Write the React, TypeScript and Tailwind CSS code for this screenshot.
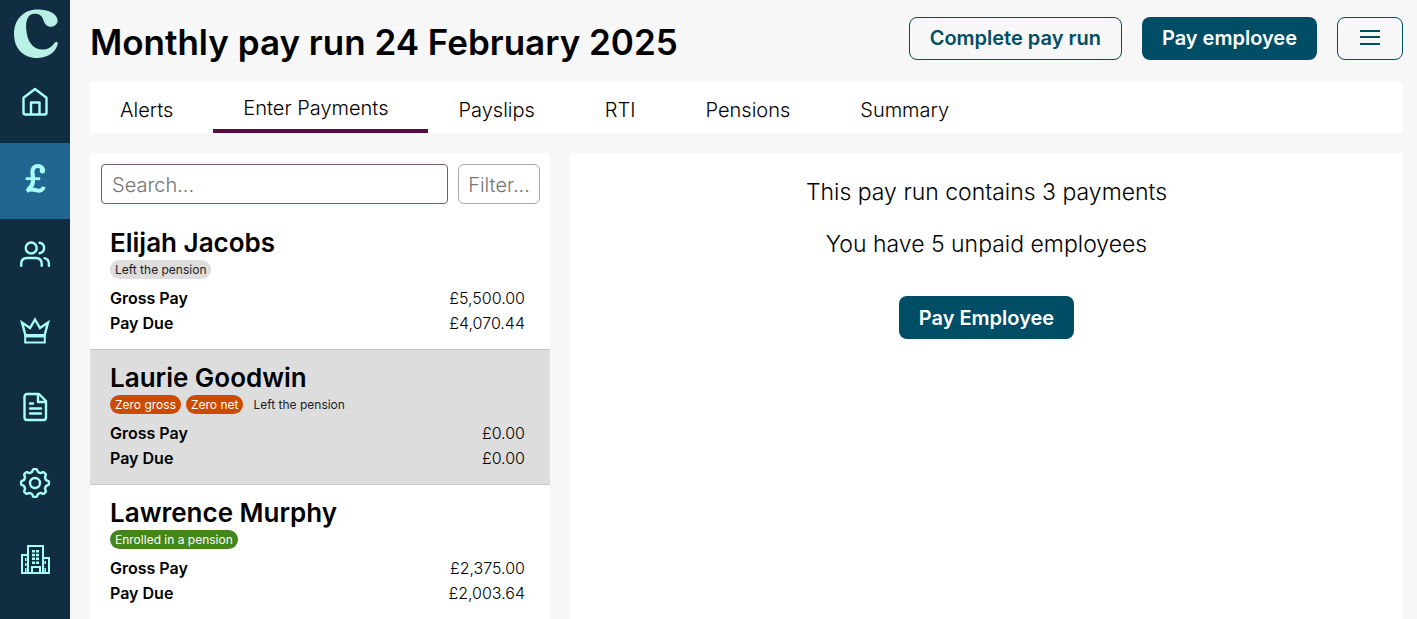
import type { ReactNode } from "react";

const iconProps = {
  viewBox: "0 0 32 32",
  className: "h-[32px] w-[32px] fill-none stroke-[#a8fff8]",
  strokeWidth: 2.4,
  "aria-hidden": true,
};

/* Outline of the eight-toothed cog, centred in a 32 unit box. */
const cogPath = (() => {
  const points: string[] = [];
  for (let i = 0; i < 96; i++) {
    const a = (i / 96) * Math.PI * 2;
    const wave = Math.max(-1, Math.min(1, Math.cos(a * 8) * 1.7));
    const r = 12.6 + wave * 1.3;
    points.push(`${(16 + r * Math.cos(a)).toFixed(2)} ${(16 + r * Math.sin(a)).toFixed(2)}`);
  }
  return `M${points.join("L")}Z`;
})();

function LogoMark() {
  return (
    <svg viewBox="0 0 46 51" className="h-[51px] w-[46px]" aria-hidden="true">
      <path
        fill="#b9efe5"
        d="M25 1.500C10 1.500 1 12 1 26c0 14 9 24 23 24 10 0 18-5 20.500-13 .9-3.500-1.300-4.200-3-2-3.500 5-8 7-13 6.500C19.500 41 14 33 13.200 21 12.600 11 15.500 6 21.500 5.700c5-.3 7.500 2 9 6.500 1.300 4.300 4 6.800 7.900 6.500 4-.3 6.500-3.200 6.200-6.700C43.800 5.500 35 1.500 25 1.500Z"
      />
    </svg>
  );
}

const HomeIcon = () => (
  <svg {...iconProps}>
    <path strokeLinejoin="round" d="M16 2 4.500 10.800V25.500a2 2 0 0 0 2 2h19a2 2 0 0 0 2-2V10.800ZM12 27.500V15.500h8.500v12" />
  </svg>
);
const PoundIcon = () => (
  <svg {...iconProps}>
    <path strokeWidth="4.200" d="M24.300 7.500C23.500 4.400 21.500 3 19 3c-4.200 0-6.200 3.200-5.500 7.500.8 5.500 2 11-4.400 16.200" />
    <path strokeWidth="2.800" d="M6.700 15.700h14.500" />
    <path strokeWidth="4" d="M7.600 28c4-2.800 7-1.500 10-.6 3.500 1.100 6.200-.1 7.200-3.600" />
    <circle cx="23.400" cy="7.800" r="2.700" fill="#a8fff8" stroke="none" />
  </svg>
);
const PeopleIcon = () => (
  <svg {...iconProps}>
    <circle cx="12.200" cy="9" r="5.500" />
    <path strokeLinecap="round" d="M2.200 26.700V25c0-4 2-6 6-6h8.500c4 0 6 2 6 6v1.700M20.600 3.800c6 1.200 6 9.200 0 10.400M25.500 19.200c3 .7 4.400 2.500 4.400 5.800v1.700" />
  </svg>
);
const CrownIcon = () => (
  <svg {...iconProps}>
    <path d="M6.500 20.500 3 7.500l8 5.500L16 4.500l5 8.500 8-5.500-3.500 13Z" />
    <path strokeWidth="2" d="M6.200 20h19.600v7.500H6.200Z" />
    <path strokeWidth="2" d="M6 21.500h20" />
  </svg>
);
const DocumentIcon = () => (
  <svg {...iconProps}>
    <path strokeLinejoin="round" d="M20 3H8a2.500 2.500 0 0 0-2.500 2.500v21A2.500 2.500 0 0 0 8 29h16.500a2.500 2.500 0 0 0 2.500-2.500V10Zm-1 0v8h8" />
    <path strokeLinecap="round" d="M11 12.500h3M11 17.500h11M11 22.500h11" />
  </svg>
);
const CogIcon = () => (
  <svg {...iconProps}>
    <path strokeLinejoin="round" d={cogPath} />
    <circle cx="16" cy="16" r="5" />
  </svg>
);
const BuildingIcon = () => (
  <svg {...iconProps}>
    <path strokeWidth="2" d="M9 31V3h15v28M9 12H3v18h27V15h-6M13 30v-6h8v6" />
    <path strokeWidth="3" d="M14.500 7v15M18.500 7v15" strokeDasharray="2.500 1.300" />
    <path strokeWidth="1.500" d="M6.800 15v3M6.800 20v3M6.800 25v5M26.200 18v3M26.200 25v5" />
  </svg>
);

const navItems: { name: string; icon: ReactNode; active?: boolean }[] = [
  { name: "Home", icon: <HomeIcon /> },
  { name: "Pay runs", icon: <PoundIcon />, active: true },
  { name: "Employees", icon: <PeopleIcon /> },
  { name: "Directors", icon: <CrownIcon /> },
  { name: "Reports", icon: <DocumentIcon /> },
  { name: "Settings", icon: <CogIcon /> },
  { name: "Employer", icon: <BuildingIcon /> },
];

const tabs = ["Alerts", "Enter Payments", "Payslips", "RTI", "Pensions", "Summary"];

const tones = {
  grey: "bg-[#dddddd] text-[#1c1c24]",
  orange: "bg-[#cd4b00] text-white",
  green: "bg-[#43871a] text-white",
};

const employees: {
  name: string;
  tags: { label: string; tone: keyof typeof tones }[];
  gross: string;
  due: string;
  selected?: boolean;
}[] = [
  { name: "Elijah Jacobs", tags: [{ label: "Left the pension", tone: "grey" }], gross: "£5,500.00", due: "£4,070.44" },
  {
    name: "Laurie Goodwin",
    tags: [
      { label: "Zero gross", tone: "orange" },
      { label: "Zero net", tone: "orange" },
      { label: "Left the pension", tone: "grey" },
    ],
    gross: "£0.00",
    due: "£0.00",
    selected: true,
  },
  { name: "Lawrence Murphy", tags: [{ label: "Enrolled in a pension", tone: "green" }], gross: "£2,375.00", due: "£2,003.64" },
];

const solidButton = "h-[43px] rounded-lg bg-[#004d66] px-5 text-[20px] font-semibold text-white";
const outlineButton = "h-[43px] rounded-lg border border-[#004d66] px-5 text-[20px] font-semibold text-[#004d66]";

export default function App() {
  return (
    <div className="flex h-screen overflow-hidden bg-[#f7f7f7] font-['Inter','Liberation_Sans',sans-serif] text-black">
      <nav aria-label="Main" className="w-[70px] shrink-0 bg-[#102d41]">
        <a href="#" aria-label="Dashboard" className="flex h-[67px] justify-center pt-2 pl-px">
          <LogoMark />
        </a>
        {navItems.map((item) => (
          <a
            key={item.name}
            href="#"
            aria-label={item.name}
            className={`flex h-[76px] items-center justify-center pb-1 ${item.active ? "bg-[#216691]" : ""}`}
          >
            {item.icon}
          </a>
        ))}
      </nav>

      <main className="flex min-w-0 flex-1 flex-col pr-3.5 pl-5">
        <header className="flex h-[82px] shrink-0 items-center justify-between">
          <h1 className="pt-0.5 text-[35px] font-semibold">Monthly pay run 24 February 2025</h1>
          <div className="flex gap-5 pb-1.5">
            <button className={outlineButton}>Complete pay run</button>
            <button className={solidButton}>Pay employee</button>
            <button aria-label="Menu" className={`${outlineButton} w-[66px]`}>
              <svg viewBox="0 0 24 18" className="h-[18px] w-[24px] fill-none stroke-[#004d66] stroke-2" aria-hidden="true">
                <path d="M2 2h20M2 8h20M2 15h20" />
              </svg>
            </button>
          </div>
        </header>

        <nav aria-label="Pay run" className="flex h-[51px] shrink-0 bg-white text-[20px] font-light">
          {tabs.map((tab) => (
            <a
              key={tab}
              href="#"
              className={`flex items-center pt-1 pr-[40px] pl-[30px] ${tab === "Enter Payments" ? "border-b-4 border-[#5a0a3c]" : ""}`}
            >
              {tab}
            </a>
          ))}
        </nav>

        <div className="mt-5 flex min-h-0 flex-1 gap-5">
          <section aria-label="Employees" className="w-[460px] shrink-0 overflow-hidden bg-white">
            <div className="flex gap-[10px] px-[10px] py-[11px]">
              <input
                aria-label="Search"
                placeholder="Search..."
                className="ml-px h-[40px] min-w-0 flex-1 rounded border border-[#7d5a6b] px-[10px] pt-0.5 text-[20px] font-light placeholder:text-[#757575]"
              />
              <button className="h-[40px] w-[82px] rounded-md border border-[#a9a9a9] pt-0.5 text-[20px] font-light text-[#757575]">
                Filter...
              </button>
            </div>
            <ul>
              {employees.map((employee) => (
                <li
                  key={employee.name}
                  className={`border-b border-[#c8c8c8] px-5 pt-[11px] pb-[13px] ${employee.selected ? "bg-[#dddddd]" : ""}`}
                >
                  <h2 className="text-[26px] leading-[34px] font-semibold">{employee.name}</h2>
                  <div className="flex gap-[5px]">
                    {employee.tags.map((tag) => (
                      <span key={tag.label} className={`rounded-full px-[5px] text-[12px] leading-[19px] ${tones[tag.tone]}`}>
                        {tag.label}
                      </span>
                    ))}
                  </div>
                  <dl className="grid grid-cols-[1fr_auto] pt-[7px] pr-[5px] text-[16px] leading-[25px]">
                    <dt className="font-semibold">Gross Pay</dt>
                    <dd className="text-right font-light">{employee.gross}</dd>
                    <dt className="font-semibold">Pay Due</dt>
                    <dd className="text-right font-light">{employee.due}</dd>
                  </dl>
                </li>
              ))}
            </ul>
          </section>

          <section aria-label="Payment" className="flex min-w-0 flex-1 flex-col items-center bg-white pt-[21px] text-[23px] leading-[36px] font-light">
            <p>This pay run contains 3 payments</p>
            <p className="mt-4">You have 5 unpaid employees</p>
            <button className={`${solidButton} mt-[34px]`}>Pay Employee</button>
          </section>
        </div>
      </main>
    </div>
  );
}
